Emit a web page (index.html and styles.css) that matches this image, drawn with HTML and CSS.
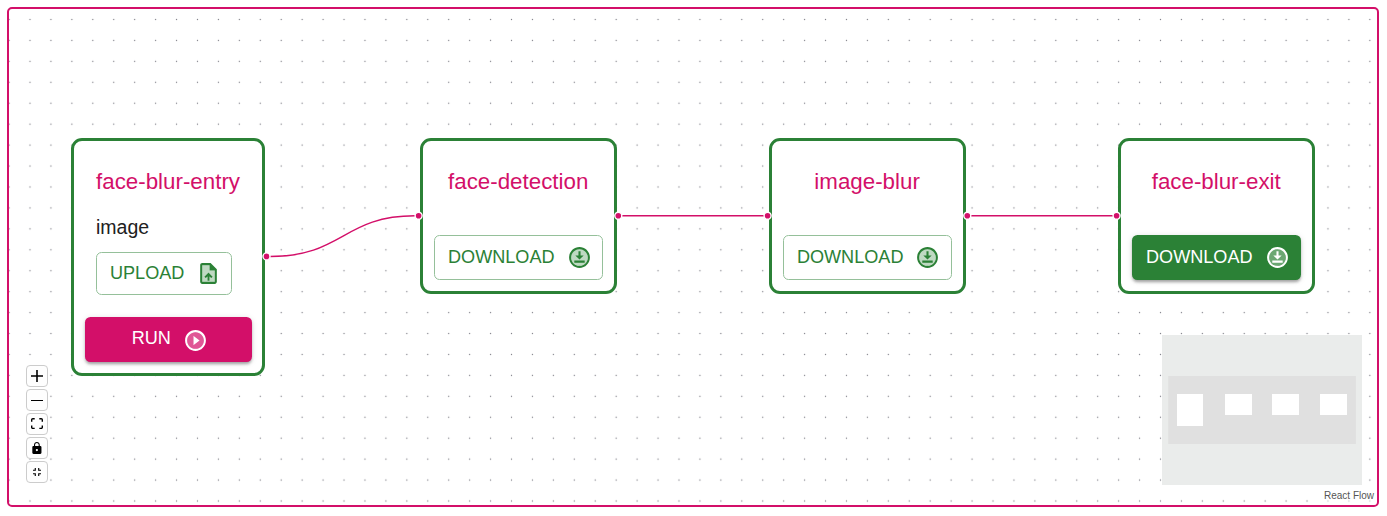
FILE: index.html
```html
<!DOCTYPE html>
<html lang="en">
<head>
<meta charset="utf-8">
<title>face-blur pipeline</title>
<link rel="stylesheet" href="styles.css">
</head>
<body>
<svg class="sprite" aria-hidden="true">
  <symbol id="download" viewBox="0 0 24 24">
    <circle cx="12" cy="12" r="8" opacity=".3"/>
    <path d="M12 2C6.49 2 2 6.49 2 12s4.49 10 10 10 10-4.49 10-10S17.51 2 12 2zm0 18c-4.41 0-8-3.59-8-8s3.59-8 8-8 8 3.59 8 8-3.59 8-8 8zm1-10V6h-2v4H8l4 4 4-4h-3zm4 7H7v-2h10v2z"/>
  </symbol>
  <symbol id="upload" viewBox="0 0 24 24">
    <path opacity=".3" d="M13 4H6v16h12V9h-5V4zm3 11h-3v4h-2v-4H8l4.01-4L16 15z"/>
    <path d="M14 2H6c-1.1 0-1.99.9-1.99 2L4 20c0 1.1.89 2 1.99 2H18c1.1 0 2-.9 2-2V8l-6-6zm4 18H6V4h7v5h5v11zM8 15.01l1.41 1.41L11 14.84V19h2v-4.16l1.59 1.59L16 15.01 12.01 11 8 15.01z"/>
  </symbol>
  <symbol id="play" viewBox="0 0 24 24">
    <path opacity=".3" d="M12 4c-4.41 0-8 3.59-8 8s3.59 8 8 8 8-3.59 8-8-3.59-8-8-8zm-2 12.500v-9l6 4.500-6 4.500z"/>
    <path d="M12 2C6.48 2 2 6.48 2 12s4.48 10 10 10 10-4.48 10-10S17.52 2 12 2zm0 18c-4.41 0-8-3.59-8-8s3.59-8 8-8 8 3.59 8 8-3.59 8-8 8zm-2-3.500l6-4.500-6-4.500z"/>
  </symbol>
</svg>
<main class="flow">
  <svg class="layer" viewBox="9 9 1368 496">
    <defs>
      <pattern id="dots" x="19.530" y="9.030" width="20.935" height="20.935" patternUnits="userSpaceOnUse">
        <circle class="dot" cx="10.470" cy="10.470" r=".7"/>
      </pattern>
    </defs>
    <rect x="9" y="9" width="1368" height="496" fill="url(#dots)"/>
    <g class="edges">
      <path d="M270 256.500C343 256.500 343 215.800 415 215.800"/>
      <path d="M621 215.800H765"/>
      <path d="M970 215.800H1114"/>
    </g>
  </svg>

  <section class="node node-entry">
    <h2 class="title">face-blur-entry</h2>
    <div class="field">
      <span class="label">image</span>
      <button class="btn outlined upload"><span>UPLOAD</span><svg class="icon"><use href="#upload"/></svg></button>
    </div>
    <button class="btn run"><span>RUN</span><svg class="icon"><use href="#play"/></svg></button>
  </section>
  <section class="node node-detect">
    <h2 class="title">face-detection</h2>
    <button class="btn outlined download"><span>DOWNLOAD</span><svg class="icon"><use href="#download"/></svg></button>
  </section>
  <section class="node node-blur">
    <h2 class="title">image-blur</h2>
    <button class="btn outlined download"><span>DOWNLOAD</span><svg class="icon"><use href="#download"/></svg></button>
  </section>
  <section class="node node-exit">
    <h2 class="title">face-blur-exit</h2>
    <button class="btn filled download"><span>DOWNLOAD</span><svg class="icon"><use href="#download"/></svg></button>
  </section>

  <svg class="layer" viewBox="9 9 1368 496">
    <g class="handles">
      <circle cx="266.500" cy="256.400" r="3.500"/>
      <circle cx="418.600" cy="215.800" r="3.500"/>
      <circle cx="618.300" cy="215.800" r="3.500"/>
      <circle cx="767.600" cy="215.800" r="3.500"/>
      <circle cx="967.300" cy="215.800" r="3.500"/>
      <circle cx="1116.600" cy="215.800" r="3.500"/>
    </g>
  </svg>

  <nav class="controls">
    <button class="control" aria-label="zoom in"><svg viewBox="0 0 32 32"><path d="M32 18.133H18.133V32h-4.266V18.133H0v-4.266h13.867V0h4.266v13.867H32z"/></svg></button>
    <button class="control" aria-label="zoom out"><svg class="minus" viewBox="0 0 12 1"><path d="M0 0h12v1H0z"/></svg></button>
    <button class="control" aria-label="fit view"><svg viewBox="0 0 32 30"><path d="M3.692 4.630c0-.53.4-.938.939-.938h5.215V0H4.708C2.130 0 0 2.054 0 4.630v5.216h3.692V4.631zM27.354 0h-5.200v3.692h5.170c.53 0 .984.400.984.939v5.215H32V4.631A4.624 4.624 0 0027.354 0zm.954 24.830c0 .532-.4.940-.939.940h-5.215v3.768h5.215c2.577 0 4.631-2.130 4.631-4.707v-5.139h-3.692v5.139zm-23.677.940a.919.919 0 01-.939-.940v-5.138H0v5.139c0 2.577 2.130 4.707 4.708 4.707h5.138V25.770H4.631z"/></svg></button>
    <button class="control" aria-label="lock"><svg viewBox="0 0 25 32"><path d="M21.333 10.667H19.810V7.619C19.810 3.429 16.380 0 12.190 0 8 0 4.571 3.429 4.571 7.619v3.048H3.048A3.056 3.056 0 000 13.714v15.238A3.056 3.056 0 003.048 32h18.285a3.056 3.056 0 003.048-3.048V13.714a3.056 3.056 0 00-3.048-3.047zM12.190 24.533a3.056 3.056 0 01-3.047-3.047 3.056 3.056 0 013.047-3.048 3.056 3.056 0 013.048 3.048 3.056 3.056 0 01-3.048 3.047zm4.724-13.866H7.467V7.619c0-2.590 2.133-4.724 4.723-4.724 2.591 0 4.724 2.133 4.724 4.724v3.048z"/></svg></button>
    <button class="control" aria-label="collapse"><svg class="small" viewBox="0 0 14 14"><path d="M0 11h3v3h2V9H0v2zm3-8H0v2h5V0H3v3zm6 11h2v-3h3V9H9v5zm2-11V0H9v5h5V3h-3z"/></svg></button>
  </nav>

  <svg class="minimap" viewBox="1162 335 200 150">
    <rect class="mask" x="1162" y="335" width="200" height="150"/>
    <rect class="view" x="1168.200" y="376" width="187.700" height="68"/>
    <g class="mini-nodes">
      <rect x="1177" y="394" width="26" height="32"/>
      <rect x="1225" y="394" width="27" height="21"/>
      <rect x="1272" y="394" width="27" height="21"/>
      <rect x="1320" y="394" width="27" height="21"/>
    </g>
  </svg>
  <footer class="credit">React Flow</footer>
</main>
</body>
</html>
```

FILE: styles.css
```css
* { box-sizing: border-box; }

body {
  margin: 0;
  padding: 7px 8px 9px 7px;
  background: #fff;
  font-family: "Liberation Sans", Arial, sans-serif;
}

.sprite { display: none; }

.flow {
  position: relative;
  height: 500px;
  border: 2px solid #d30f69;
  border-radius: 5px;
  overflow: hidden;
}

.layer { position: absolute; inset: 0; width: 1368px; height: 496px; }
.dot { fill: #81818a; }
.edges path { fill: none; stroke: #d30f69; stroke-width: 1.4; }
.handles circle { fill: #d30f69; stroke: #fff; stroke-width: 1.4; }

/* nodes on the canvas */
.node {
  position: absolute;
  top: 128.600px;
  width: 197px;
  height: 156.400px;
  padding: 11.200px;
  border: 3px solid #2b8136;
  border-radius: 11px;
  background: #fff;
  display: flex;
  flex-direction: column;
  align-items: center;
}
.node-entry { left: 62.200px; width: 194.300px; height: 238.600px; }
.node-detect { left: 411px; }
.node-blur { left: 759.900px; }
.node-exit { left: 1109px; }

.title {
  margin: 13px .6px 0 0;
  font-size: 22.330px;
  line-height: 34px;
  font-weight: 400;
  color: #d30f69;
  white-space: nowrap;
}

.field { align-self: flex-start; margin: 14px 0 0 10.600px; }
.label { display: block; height: 39px; font-size: 19.500px; line-height: 29px; color: #212121; }

.btn {
  display: flex;
  align-items: center;
  padding: 0 14px;
  border: 0;
  border-radius: 5.500px;
  font: 18.100px "Liberation Sans", Arial, sans-serif;
  white-space: nowrap;
}
.btn .icon { width: 25px; height: 25px; margin-top: 1px; fill: currentColor; flex: none; }
.outlined { border: 1px solid #95c09a; background: #fff; color: #2b8136; padding: 0 13px; }
.upload { width: 136px; height: 43.500px; justify-content: space-between; padding-right: 10px; }
.download { width: 169px; height: 45px; margin-top: auto; justify-content: space-between; padding-right: 10.500px; }
.filled { background: #2b8136; color: #fff; padding-right: 11.500px; }
.filled, .run { box-shadow: 0 3px 3px -1px rgba(0,0,0,.2), 0 2px 3px rgba(0,0,0,.14), 0 1px 6px rgba(0,0,0,.12); }
.run { width: 166.500px; height: 45px; margin-top: auto; padding: 0 12px 0 15px; justify-content: center; gap: 12px; background: #d30f69; color: #fff; }
.run span { padding-bottom: 2px; }
.upload .icon { margin-right: .3px; margin-top: 0; }

/* canvas controls */
.controls {
  position: absolute;
  left: 17px;
  top: 356px;
  display: flex;
  flex-direction: column;
  gap: 2px;
}
.control {
  width: 22px;
  height: 22px;
  padding: 0;
  display: flex;
  align-items: center;
  justify-content: center;
  border: 1px solid #ccc;
  border-radius: 4px;
  background: #fefefe;
}
.control svg { width: 12px; max-height: 12px; }
.control .minus { height: 1px; }
.control .small { width: 8px; }

.minimap { position: absolute; left: 1153px; top: 326px; width: 200px; height: 150px; }
.mask { fill: #eaeceb; }
.view { fill: #e0e0e0; }
.mini-nodes { fill: #fff; }

.credit {
  position: absolute;
  right: 1px;
  bottom: 0;
  padding: 2px;
  font-size: 10px;
  line-height: 15px;
  color: #555;
  background: rgba(255,255,255,.5);
}
```
